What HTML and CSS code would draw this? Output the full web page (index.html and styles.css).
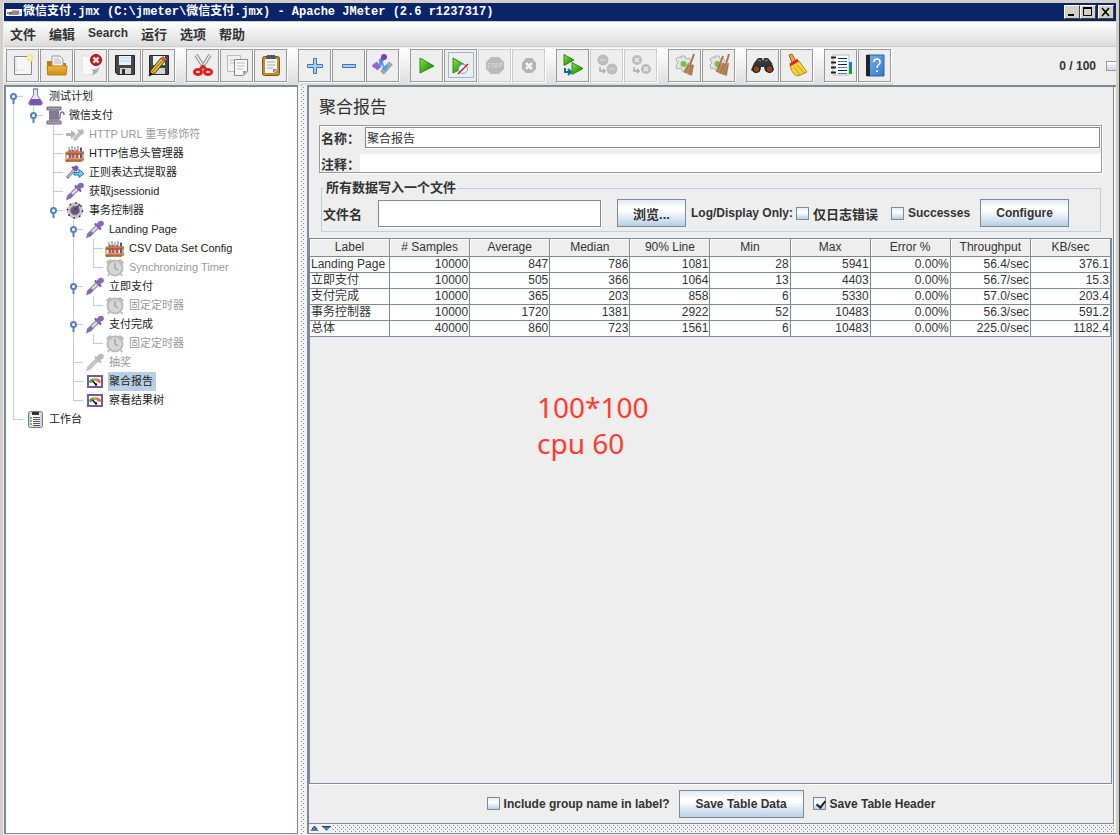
FILE: index.html
```html
<!DOCTYPE html>
<html lang="zh-CN">
<head>
<meta charset="utf-8">
<title>微信支付.jmx - Apache JMeter</title>
<link rel="stylesheet" href="styles.css">
</head>
<body>
<svg class="defs" aria-hidden="true">
  <defs>
    <linearGradient id="gGreen" x1="0" y1="0" x2="1" y2="1"><stop offset="0" stop-color="#8fe05a"/><stop offset=".5" stop-color="#3fb418"/><stop offset="1" stop-color="#1c5c10"/></linearGradient>
    <linearGradient id="gFolder" x1="0" y1="0" x2="0" y2="1"><stop offset="0" stop-color="#f2b93c"/><stop offset="1" stop-color="#cf8a14"/></linearGradient>
    <linearGradient id="gBook" x1="0" y1="0" x2="1" y2="1"><stop offset="0" stop-color="#7db4ec"/><stop offset="1" stop-color="#2f78cc"/></linearGradient>
    <symbol id="dropper" viewBox="0 0 20 19"><path d="M3.500 15.500L13 6" stroke="#77728a" stroke-width="4.500"/><path d="M4 15L13 6" stroke="#dcd8e6" stroke-width="2.500"/><path d="M1 18.500l1-4 4-3.500 2.500 2.500L4 17z" fill="#8866b8"/><path d="M10 3.500l6 6" stroke="#6a4a9e" stroke-width="2"/><path d="M12 7l4-4" stroke="#8866b8" stroke-width="5"/><circle cx="16" cy="3.500" r="2.800" fill="#8866b8"/></symbol>
    <symbol id="dropperOff" viewBox="0 0 20 19"><path d="M3.500 15.500L13 6" stroke="#c4c4c4" stroke-width="4"/><path d="M1 18.500l1-4 4-3.500 2.500 2.500L4 17z" fill="#c4c4c4"/><path d="M10 3.500l6 6" stroke="#b0b0b0" stroke-width="2"/><path d="M12 7l4-4" stroke="#bababa" stroke-width="5"/><circle cx="16" cy="3.500" r="2.800" fill="#bababa"/></symbol>
    <symbol id="rack" viewBox="0 0 20 19"><path d="M4 3v11M7 2v12M10 3v11M13 2v12M16 3v11" stroke="#b9b6cc" stroke-width="2"/><path d="M4 6h2v8H4z" fill="#7060b8"/><path d="M7 6h2v8H7zM11 6h2v8h-2z" fill="#d04a68"/><path d="M15 4h2v10h-2z" fill="#3a50d8"/><path d="M3 8.500h16M1 10l2-2M2 15.500h17M1 17.500l3-2" stroke="#d07c34" stroke-width="2.500"/><path d="M1 10h17M1 17h16" stroke="#a35c22" stroke-width="1.500"/><path d="M1 9v8M18 8v7" stroke="#b86c2c"/></symbol>
    <symbol id="clock" viewBox="0 0 20 19"><path d="M1 4l4-3 3 2-5 4zM19 4l-4-3-3 2 5 4z" fill="#bbb"/><circle cx="10" cy="10" r="7.500" fill="#d6d6d6" stroke="#bcbcbc" stroke-width="2"/><path d="M4 16l-1 2M16 16l1 2" stroke="#bbb" stroke-width="2"/><path d="M10 5v5l3 2" fill="none" stroke="#a4a4a4" stroke-width="1.500"/></symbol>
    <symbol id="gauge" viewBox="0 0 20 19"><rect x="3" y="4" width="14" height="11" fill="#fff" stroke="#7658a8" stroke-width="2"/><path d="M4 10.500a5 4 0 0 1 4-4l1 2.500-3 2z" fill="#37b04a"/><path d="M7.500 6.500a6 4 0 0 1 5 0l-1 2.500H9z" fill="#e8a030"/><path d="M12 6.500a5 4 0 0 1 4 4l-2 .500-3-2z" fill="#f06a50"/><path d="M11 12.500L7.500 9" stroke="#111" stroke-width="1.500"/><circle cx="11" cy="12.500" r="1.200"/></symbol>
    <symbol id="play" viewBox="0 0 24 24"><path d="M5 5v15l14-7z" fill="url(#gGreen)" stroke="#2c8a18"/></symbol>
    <symbol id="twoplay" viewBox="0 0 24 24"><path d="M3 1.500v11l10-5.500z" fill="url(#gGreen)" stroke="#2c8a18"/><path d="M11 9.500v12l11-6z" fill="url(#gGreen)" stroke="#2c8a18"/><path d="M4 15v4h5M7 16l3 3-3 3" fill="none" stroke="#156c86" stroke-width="2"/></symbol>
    <symbol id="gear" viewBox="0 0 24 24"><path d="M8 3h4l1 3 3-1 2 3-2 2 1 4-3 1-2 3H9l-1-3-4 1-1-4 2-2-2-4 3-2 2 1z" fill="#e4e4e4" stroke="#b0b0b0"/><circle cx="10.500" cy="11" r="3" fill="#7ac142"/></symbol>
    <symbol id="handle" viewBox="0 0 7 11"><path d="M3.500 5v6" stroke="#5580bd" stroke-width="2"/><circle cx="3.500" cy="3.500" r="2.500" fill="#fff" stroke="#5580bd" stroke-width="2"/></symbol>
  </defs>
</svg>
<div class="window">
  <header class="titlebar">
    <svg class="appicon" viewBox="0 0 16 7"><path fill="#fff" d="M0 0h16v7H0z"/><path d="M1 4h3l2-1h7M3 5h10" stroke="#222" fill="none"/><path d="M6 2h7" stroke="#e05050"/><path d="M10 4h5" stroke="#8878c0"/></svg>
    <h1 class="caption">微信支付.jmx (C:\jmeter\微信支付.jmx) - Apache JMeter (2.6 r1237317)</h1>
    <div class="winbuttons">
      <button class="winbtn" aria-label="Minimize"><svg viewBox="0 0 12 10"><path d="M2 8h6" stroke="#000" stroke-width="2"/></svg></button>
      <button class="winbtn" aria-label="Maximize"><svg viewBox="0 0 12 10"><path d="M1.500 1.500h8v7h-8z" fill="none" stroke="#000"/><path d="M1 1h9" stroke="#000" stroke-width="2"/></svg></button>
      <button class="winbtn closebtn" aria-label="Close"><svg viewBox="0 0 12 10"><path d="M2 1l7 8M9 1L2 9" stroke="#000" stroke-width="1.600"/></svg></button>
    </div>
  </header>
  <nav class="menubar">
    <button>文件</button><button>编辑</button><button class="latin">Search</button><button>运行</button><button>选项</button><button>帮助</button>
  </nav>
  <div class="toolrow">
    <div class="toolbar">
      <div class="group">
        <button class="tool" aria-label="New"><svg viewBox="0 0 24 24"><path d="M3.500 3.500h17v18h-17z" fill="#f6f6f6" stroke="#888"/><path d="M5 17h9M5 5v14" stroke="#ddd"/><circle cx="19" cy="5" r="2.500" fill="#fffbd0" stroke="#f4e68a" stroke-width="2"/></svg></button>
        <button class="tool" aria-label="Open"><svg viewBox="0 0 24 24"><path d="M2 8h5l2 2h12v12H2z" fill="#b87a18"/><path d="M7 3h8l3 3v9H7z" fill="#f4f4f4" stroke="#999"/><path d="M9 6h5M9 8h7M9 10h7" stroke="#bbb"/><path d="M2 13h20l-1 9H3z" fill="url(#gFolder)" stroke="#c08018"/></svg></button>
        <button class="tool" aria-label="Close"><svg viewBox="0 0 24 24"><path d="M3 3h17v13l-6 6H3z" fill="#f8f8f8" stroke="#ddd"/><path d="M12 22c3-1 2-4 1-6 3 1 6 0 7-2 0 4-3 8-8 8z" fill="#aaa"/><circle cx="17" cy="7" r="5.500" fill="#c8201c" stroke="#931010"/><path d="M14.500 4.500l5 5M19.500 4.500l-5 5" stroke="#fff" stroke-width="2"/></svg></button>
        <button class="tool" aria-label="Save"><svg viewBox="0 0 24 24"><path d="M2.500 2.500h19v19h-17l-2-2z" fill="#44484c" stroke="#25282a"/><path d="M6 3h12v9H6z" fill="#eaf3fb"/><path d="M7 5h10M7 8h10" stroke="#b5d0e8"/><path d="M7 15h11v6H7z" fill="#d4d4d4"/><path d="M9 16h3v5H9z" fill="#333"/></svg></button>
        <button class="tool" aria-label="Save as"><svg viewBox="0 0 24 24"><path d="M2.500 2.500h19v19h-17l-2-2z" fill="#44484c" stroke="#25282a"/><path d="M6 3h12v9H6z" fill="#eaf3fb"/><path d="M7 15h11v6H7z" fill="#d4d4d4"/><path d="M2 23l2-6L14 5l4 3L8 20z" fill="#edbd2e" stroke="#483808"/><path d="M5 19L16 7" stroke="#836414"/><path d="M2 23l1-4 3 2z" fill="#111"/><path d="M14 5l2-2 4 3-2 2z" fill="#d85840"/></svg></button>
      </div>
      <div class="group">
        <button class="tool" aria-label="Cut"><svg viewBox="0 0 24 24"><path d="M5 2l9 14M19 2l-9 14" stroke="#888" stroke-width="3.500"/><path d="M5 2l9 14M19 2l-9 14" stroke="#eee" stroke-width="1.500"/><path d="M9 16l3-3 3 3" fill="none" stroke="#d8221c" stroke-width="2.500"/><ellipse cx="7" cy="19" rx="3.500" ry="2.500" fill="none" stroke="#d8221c" stroke-width="3"/><ellipse cx="17" cy="19" rx="3.500" ry="2.500" fill="none" stroke="#d8221c" stroke-width="3"/></svg></button>
        <button class="tool" aria-label="Copy"><svg viewBox="0 0 24 24"><path d="M2.500 2.500h13v16h-13z" fill="#f2f2f2" stroke="#bbb"/><path d="M9.500 6.500h13v12l-4 4h-9z" fill="#f8f8f8" stroke="#888"/><path d="M5 7h4M5 10h4M12 10h8M12 13h8M12 16h6" stroke="#bbb"/><path d="M18 22v-4h4z" fill="#999"/></svg></button>
        <button class="tool" aria-label="Paste"><svg viewBox="0 0 24 24"><rect x="3.500" y="3.500" width="17" height="19" rx="2" fill="#c28a35" stroke="#805416"/><path d="M6 6h12v11l-3 3H6z" fill="#f5f5f5"/><path d="M8 2h8l1 4H7z" fill="#555a58"/><path d="M8 9h8M8 12h8M8 15h6" stroke="#aaa"/><path d="M14 20v-4h4z" fill="#888"/></svg></button>
      </div>
      <div class="group">
        <button class="tool" aria-label="Expand all"><svg viewBox="0 0 24 24"><path d="M10.500 5.500h3v6h6v3h-6v6h-3v-6h-6v-3h6z" fill="#aed0f0" stroke="#3c74b4"/></svg></button>
        <button class="tool" aria-label="Collapse all"><svg viewBox="0 0 24 24"><path d="M5.500 11.500h13v3h-13z" fill="#aed0f0" stroke="#3c74b4"/></svg></button>
        <button class="tool" aria-label="Toggle"><svg viewBox="0 0 24 24"><path d="M11 20L20 10" stroke="#a5a5a5" stroke-width="5"/><path d="M2 14l5-4M5 16l4-4M9 9l4-5" stroke="#9468d0" stroke-width="4"/><circle cx="13" cy="4" r="3" fill="#7440bc"/><path d="M8 8l4 1 1 4 4-1-2 6-4-2 1-3-4-1z" fill="#38a8f4"/></svg></button>
      </div>
      <div class="group">
        <button class="tool" aria-label="Start"><svg><use href="#play"/></svg></button>
        <button class="tool focused" aria-label="Start no pauses"><svg viewBox="0 0 24 24"><path d="M4 5v15l14-7z" fill="url(#gGreen)" stroke="#2c8a18"/><circle cx="14" cy="16" r="4.500" fill="#eef6fc" stroke="#7aa6cf"/><path d="M9 21l10-10" stroke="#dc1818" stroke-width="1.500"/></svg></button>
        <button class="tool" disabled aria-label="Stop"><svg viewBox="0 0 24 24"><path d="M8 4h8l5 5v7l-5 5H8l-5-5V9z" fill="#bababa"/><path d="M6.500 10.500H5v2h1.500v2H4.500M8 10.500h3M9.500 10.500v4M12 10.500h2v4h-2zM16.500 14.500v-4H19v2h-2.500" fill="none" stroke="#d6d6d6"/></svg></button>
        <button class="tool" disabled aria-label="Shutdown"><svg viewBox="0 0 24 24"><path d="M9 5h6l4 5v6l-4 4H9l-4-4v-6z" fill="#b4b4b4"/><path d="M9 10l6 6M15 10l-6 6" stroke="#f4f4f4" stroke-width="2.500"/></svg></button>
      </div>
      <div class="group">
        <button class="tool" aria-label="Remote start all"><svg><use href="#twoplay"/></svg></button>
        <button class="tool" disabled aria-label="Remote stop all"><svg viewBox="0 0 24 24"><circle cx="8" cy="7" r="5.500" fill="#bdbdbd"/><circle cx="17" cy="16" r="5.500" fill="#bdbdbd"/><path d="M5 7h6M14 16h6" stroke="#d0d0d0" stroke-width="2"/><path d="M5 14v4h5M8 16l2 2-2 2" fill="none" stroke="#aaa" stroke-width="1.500"/></svg></button>
        <button class="tool" disabled aria-label="Remote shutdown all"><svg viewBox="0 0 24 24"><circle cx="8" cy="7" r="5" fill="#bdbdbd"/><circle cx="17" cy="16" r="5" fill="#bdbdbd"/><path d="M6 5l4 4M10 5l-4 4M15 14l4 4M19 14l-4 4" stroke="#eee" stroke-width="1.500"/><path d="M5 14v4h5M8 16l2 2-2 2" fill="none" stroke="#aaa" stroke-width="1.500"/></svg></button>
      </div>
      <div class="group">
        <button class="tool" aria-label="Clear"><svg viewBox="0 0 24 24"><use href="#gear"/><path d="M21 1l-4 11" stroke="#a87850" stroke-width="2"/><path d="M15 10l6 2-2 11-9-4z" fill="#b98d62"/><path d="M16 12l-4 8M18 12l-2 10M20 12l-2 10" stroke="#9a7248"/></svg></button>
        <button class="tool" aria-label="Clear all"><svg viewBox="0 0 24 24"><use href="#gear"/><path d="M16 3l-3 8M22 1l-3 10" stroke="#a87850" stroke-width="2"/><path d="M11 10h11l-2 13-11-4z" fill="#b98d62"/><path d="M13 11l-3 8M16 12l-3 9M18 11l-2 11M21 12l-3 10" stroke="#9a7248"/></svg></button>
      </div>
      <div class="group">
        <button class="tool" aria-label="Search"><svg viewBox="0 0 24 24"><path d="M3 10l4-5h4l1 3 1-3h4l4 5 2 7-4 3-5-2-1-4h-3l-1 4-5 2-4-3z" fill="#34383a"/><circle cx="5.500" cy="16" r="3.500" fill="#88451c" stroke="#181818"/><circle cx="18.500" cy="16" r="3.500" fill="#88451c" stroke="#181818"/><path d="M7 7l3 1M17 7l-3 1" stroke="#858a8c"/></svg></button>
        <button class="tool" aria-label="Search reset"><svg viewBox="0 0 24 24"><path d="M4 2l3-1 4 7-4 2z" fill="#e6a63c" stroke="#9c661c"/><path d="M5 12l9-4 8 11-9 4c-5-1-7-6-8-11z" fill="#f4d13c" stroke="#b48718"/><path d="M5 12l8-5" stroke="#dc2828" stroke-width="3"/><path d="M9 14l6 8M12 12l7 8" stroke="#c29618"/></svg></button>
      </div>
      <div class="group">
        <button class="tool" aria-label="Function helper"><svg viewBox="0 0 24 24"><path d="M4 2h16v20H4z" fill="#fff" stroke="#bbb"/><path d="M20 9h3v6h-3z" fill="#2878dc"/><path d="M20 15h3v6h-3z" fill="#18a038"/><path d="M2 4.500h5M2 9.500h5M2 14.500h5M2 19.500h5" stroke="#222" stroke-width="2"/><path d="M9 5.500h9M9 11.500h9M9 17.500h9" stroke="#222"/><path d="M9 8.500h9M9 14.500h9M9 20.500h9" stroke="#3584e4"/></svg></button>
        <button class="tool" aria-label="Help"><svg viewBox="0 0 24 24"><path d="M4 2h17v21H4z" fill="url(#gBook)" stroke="#31649c"/><path d="M3 2h4v21H3z" fill="#202428"/><path d="M11 9c0-4 6-4 6 0 0 3-3 2.500-3 6M14 17v2" fill="none" stroke="#fff" stroke-width="1.600"/></svg></button>
      </div>
    </div>
    <output class="threads">0 / 100</output>
    <span class="indicator"></span>
  </div>

  <div class="workspace">
    <aside class="treepane">
      <ul class="tree">
        <li><div class="node"><svg class="knob"><use href="#handle"/></svg><svg class="icon" viewBox="0 0 20 19"><path d="M8 2h5M8.500 2v6L4 15c-1 2 0 3 2 3h9c2 0 3-1 2-3l-4.500-7V2z" fill="#e8e4f0" stroke="#85809a"/><path d="M6 12h9l2 4-1 2H5l-1-2z" fill="#7a55b4"/></svg><span>测试计划</span></div>
          <ul>
            <li><div class="node"><svg class="knob"><use href="#handle"/></svg><svg class="icon" viewBox="0 0 20 19"><path d="M2 1h14v3H2zM2 15h14v3H2z" fill="#aaa2b4" stroke="#706878"/><path d="M4 4h10v11H4z" fill="#958ca2"/><path d="M4 6h10M4 8h10M4 10h10M4 12h10" stroke="#716781"/><path d="M14 13c2 0 0-7 3-7 1 0 2 1 2 3" fill="none" stroke="#807890" stroke-width="1.500"/></svg><span>微信支付</span></div>
              <ul>
                <li class="off"><div class="node"><svg class="icon" viewBox="0 0 20 19"><path d="M1 8h5V5l5 4-5 5v-3H1z" fill="#b4b4b4"/><path d="M9 15l9-10" stroke="#c0c0c0" stroke-width="4"/><path d="M13 5l5 4" stroke="#b4b4b4" stroke-width="2"/></svg><span>HTTP URL 重写修饰符</span></div></li>
                <li><div class="node"><svg class="icon"><use href="#rack"/></svg><span>HTTP信息头管理器</span></div></li>
                <li><div class="node"><svg class="icon" viewBox="0 0 20 19"><path d="M2 15l8-9" stroke="#8c86a0" stroke-width="3"/><path d="M3 14l6-7" stroke="#dcd8e6"/><path d="M7 4l5 4" stroke="#6a4a9e" stroke-width="2"/><circle cx="11" cy="5" r="2.500" fill="#7a58ae"/><path d="M9 9.500h5V6.500l5 4-5 4v-2.500H9z" fill="#7cc8f4" stroke="#1878b8"/></svg><span>正则表达式提取器</span></div></li>
                <li><div class="node"><svg class="icon"><use href="#dropper"/></svg><span>获取jsessionid</span></div></li>
                <li><div class="node"><svg class="knob"><use href="#handle"/></svg><svg class="icon" viewBox="0 0 20 19"><circle cx="10" cy="9.500" r="7.500" fill="#cfc8da" stroke="#b4aec4"/><circle cx="10" cy="9.500" r="7.500" fill="none" stroke="#222" stroke-width="1.500" stroke-dasharray="1.500 4.400"/><circle cx="10" cy="9.500" r="4.500" fill="#665878" stroke="#8c80a0"/><path d="M10 9l5-6" stroke="#444" stroke-width="1.500"/></svg><span>事务控制器</span></div>
                  <ul>
                    <li><div class="node"><svg class="knob"><use href="#handle"/></svg><svg class="icon"><use href="#dropper"/></svg><span>Landing Page</span></div>
                      <ul>
                        <li><div class="node"><svg class="icon"><use href="#rack"/></svg><span>CSV Data Set Config</span></div></li>
                        <li class="off"><div class="node"><svg class="icon"><use href="#clock"/></svg><span>Synchronizing Timer</span></div></li>
                      </ul></li>
                    <li><div class="node"><svg class="knob"><use href="#handle"/></svg><svg class="icon"><use href="#dropper"/></svg><span>立即支付</span></div>
                      <ul><li class="off"><div class="node"><svg class="icon"><use href="#clock"/></svg><span>固定定时器</span></div></li></ul></li>
                    <li><div class="node"><svg class="knob"><use href="#handle"/></svg><svg class="icon"><use href="#dropper"/></svg><span>支付完成</span></div>
                      <ul><li class="off"><div class="node"><svg class="icon"><use href="#clock"/></svg><span>固定定时器</span></div></li></ul></li>
                    <li class="off"><div class="node"><svg class="icon"><use href="#dropperOff"/></svg><span>抽奖</span></div></li>
                    <li><div class="node selected"><svg class="icon"><use href="#gauge"/></svg><span>聚合报告</span></div></li>
                    <li><div class="node"><svg class="icon"><use href="#gauge"/></svg><span>察看结果树</span></div></li>
                  </ul></li>
              </ul></li>
          </ul></li>
        <li><div class="node"><svg class="icon" viewBox="0 0 20 19"><rect x="3.500" y="1.500" width="14" height="16" rx="2" fill="#d8d4e0" stroke="#7c7490"/><path d="M6 4h9v12H6z" fill="#f5f5f5"/><path d="M7 2h7v3H7z" fill="#333"/><path d="M8 7.500h7M8 9.500h7M8 11.500h7M8 13.500h7M8 15.500h7" stroke="#555"/><path d="M5 8h2M5 11h2M5 14h2" stroke="#3cb828" stroke-width="1.500"/></svg><span>工作台</span></div></li>
      </ul>
    </aside>
    <div class="vsplit"></div>
    <div class="rightside">
      <main class="report">
        <h2>聚合报告</h2>
        <div class="identity">
          <div class="idrow"><label for="name">名称：</label><input id="name" class="field" type="text" value="聚合报告"></div>
          <div class="idrow comment"><label for="comment">注释：</label><input id="comment" type="text"></div>
        </div>
        <fieldset class="filebox">
          <legend>所有数据写入一个文件</legend>
          <div class="filerow">
            <label for="file">文件名</label>
            <input id="file" class="field filename" type="text">
            <button class="btn browse">浏览...</button>
            <span class="logonly">Log/Display Only:</span>
            <label class="check errors"><input type="checkbox">仅日志错误</label>
            <label class="check"><input type="checkbox">Successes</label>
            <button class="btn configure">Configure</button>
          </div>
        </fieldset>
        <section class="results">
          <table>
            <thead><tr><th>Label</th><th># Samples</th><th>Average</th><th>Median</th><th>90% Line</th><th>Min</th><th>Max</th><th>Error %</th><th>Throughput</th><th>KB/sec</th></tr></thead>
            <tbody>
              <tr><td>Landing Page</td><td>10000</td><td>847</td><td>786</td><td>1081</td><td>28</td><td>5941</td><td>0.00%</td><td>56.4/sec</td><td>376.1</td></tr>
              <tr><td>立即支付</td><td>10000</td><td>505</td><td>366</td><td>1064</td><td>13</td><td>4403</td><td>0.00%</td><td>56.7/sec</td><td>15.3</td></tr>
              <tr><td>支付完成</td><td>10000</td><td>365</td><td>203</td><td>858</td><td>6</td><td>5330</td><td>0.00%</td><td>57.0/sec</td><td>203.4</td></tr>
              <tr><td>事务控制器</td><td>10000</td><td>1720</td><td>1381</td><td>2922</td><td>52</td><td>10483</td><td>0.00%</td><td>56.3/sec</td><td>591.2</td></tr>
              <tr><td>总体</td><td>40000</td><td>860</td><td>723</td><td>1561</td><td>6</td><td>10483</td><td>0.00%</td><td>225.0/sec</td><td>1182.4</td></tr>
            </tbody>
          </table>
          <p class="note">100*100<br>cpu 60</p>
        </section>
        <footer class="savebar">
          <label class="check"><input type="checkbox">Include group name in label?</label>
          <button class="btn savebtn">Save Table Data</button>
          <label class="check"><input type="checkbox" checked>Save Table Header</label>
        </footer>
      </main>
      <div class="hsplit"><svg viewBox="0 0 24 7"><path d="M1 6l4.500-4.500L10 6z" fill="#5078b8"/><path d="M3 4l2.500-3L8 4" fill="none" stroke="#333"/><path d="M13 1.500h9L17.500 6z" fill="#5078b8"/><path d="M13 1.500h9" stroke="#333"/></svg></div>
    </div>
  </div>
</div>
</body>
</html>
```
FILE: styles.css
```css
* { box-sizing: border-box; }
body {
  margin: 0;
  color: #333;
  font: 12px "Liberation Sans", "Noto Sans CJK SC", sans-serif;
}
button, input { font: inherit; color: inherit; margin: 0; }
.defs { position: absolute; width: 0; height: 0; }
.window {
  display: flex;
  flex-direction: column;
  min-height: 100vh;
  padding: 3px 3px 1px 4px;
  background: #eee;
  border-right: 1px solid #404040;
  box-shadow: inset 0 3px #d4d0c8, inset 3px 0 #d4d0c8, inset -3px 0 #d4d0c8;
}

.titlebar {
  display: flex;
  align-items: center;
  height: 18px;
  padding: 0 2px;
  background: #0a246a;
  color: #fff;
}
.appicon { width: 16px; height: 7px; margin-right: 1px; }
.caption {
  flex: 1;
  margin: 0;
  font: bold 12px/20px "Liberation Mono", "Noto Sans CJK SC", monospace;
  white-space: pre;
}
.winbuttons { display: flex; }
.winbtn {
  display: flex;
  align-items: center;
  justify-content: center;
  width: 16px;
  height: 14px;
  padding: 0;
  background: #d4d0c8;
  border: 1px solid;
  border-color: #fff #404040 #404040 #fff;
}
.winbtn svg { width: 12px; height: 10px; }
.closebtn { margin-left: 2px; }

.menubar {
  display: flex;
  align-items: center;
  gap: 13px;
  height: 26px;
  padding: 0 6px 2px;
  background: linear-gradient(#fff, #dcdcdc);
  border-top: 1px solid #d4d0c8;
  border-bottom: 1px solid #ccc;
}
.menubar button {
  padding: 0;
  border: 0;
  background: none;
  font-weight: bold;
  font-size: 13px;
}
.menubar .latin { font-size: 12px; }

.toolrow { display: flex; align-items: center; height: 38px; }
.toolbar {
  display: flex;
  gap: 11px;
  height: 37px;
  padding: 1px 2px;
  background: linear-gradient(#fff, #ddd);
}
.group { display: flex; gap: 1px; }
.tool {
  display: flex;
  align-items: center;
  justify-content: center;
  width: 33px;
  height: 33px;
  padding: 0;
  background: #eee;
  border: 1px solid #999;
  box-shadow: 1px 1px #fff;
}
.tool svg { width: 24px; height: 24px; }
.tool:disabled { border-color: #ccc; }
.focused svg { outline: 1px solid #a3b8cc; }
.threads { margin-left: auto; font-weight: bold; }
.indicator {
  width: 10px;
  height: 10px;
  margin-left: 10px;
  background: linear-gradient(#fff, #c8d8ea);
  border: 1px solid #999;
  border-right: 0;
}

.workspace { display: flex; flex: 1; }
.treepane {
  width: 294px;
  background: #fff;
  border: 2px solid #7a8a99;
  border-right-width: 1px;
  border-bottom-width: 1px;
}
.tree, .tree ul { list-style: none; margin: 0; padding: 0; }
.tree { padding-left: 7px; font-size: 11px; color: #222; }
.tree ul { padding-left: 20px; }
.tree li { position: relative; }
.tree li::before {
  content: "";
  position: absolute;
  left: 0;
  top: 0;
  bottom: 0;
  border-left: 1px solid #b8cfe5;
}
.tree > li:first-child::before { top: 10px; }
.tree li:last-child::before { bottom: auto; height: 10px; }
.node {
  display: flex;
  height: 19px;
  padding-left: 12px;
  line-height: 19px;
  white-space: nowrap;
  background: linear-gradient(#b8cfe5, #b8cfe5) 0 9px / 10px 1px no-repeat;
}
.node .knob { position: absolute; left: -3px; top: 6px; width: 7px; height: 11px; }
.icon { width: 20px; height: 19px; margin-right: 3px; }
.node span { padding: 0 3px 0 1px; }
.off span { color: #999; }
.selected span { background: #b8cfe5; }

.vsplit, .hsplit {
  background-color: #f2f2f2;
  background-image:
    conic-gradient(at 1px 1px, transparent 270deg, #7a8a99 0),
    conic-gradient(at 1px 1px, transparent 270deg, #7a8a99 0);
  background-size: 4px 4px;
  background-position: 0 0, 2px 2px;
}
.vsplit { width: 9px; border: solid #f2f2f2; border-width: 0 2px 0 3px; }
.rightside {
  display: flex;
  flex-direction: column;
  flex: 1;
  min-width: 0;
  border: 2px solid #7a8a99;
  border-right: 0;
  border-bottom-width: 1px;
}
.hsplit { height: 9px; line-height: 0; border: solid #f2f2f2; border-width: 1px 2px 1px 0; }
.hsplit svg { width: 24px; height: 7px; background: #f2f2f2; }
.report {
  display: flex;
  flex-direction: column;
  flex: 1;
  margin-right: 2px;
  border-right: 1px solid #7a8a99;
  border-bottom: 1px solid #7a8a99;
  box-shadow: 1px 1px #fff;
}
.report h2 {
  margin: 9px 10px 5px;
  font-size: 17px;
  line-height: 24px;
  font-weight: normal;
}
.identity {
  margin: 0 11px 0 10px;
  padding: 1px 0 0 1px;
  border: 1px solid #999;
  box-shadow: inset 1px 1px #fff, 1px 1px #fff;
}
.idrow { display: flex; align-items: center; height: 21px; padding-right: 1px; }
.idrow label { width: 44px; font-size: 13px; font-weight: bold; white-space: nowrap; }
.comment { height: 18px; margin-top: 6px; padding: 0; }
.comment label { width: 39px; }
.idrow input { flex: 1; height: 100%; min-width: 0; padding: 0 1px; border: 0; background: #fff; }
.idrow .field, .field { background: #fff; border: 1px solid #7a8a99; }
.field { box-shadow: 1px 1px #fff; }
.filebox {
  min-width: 0;
  margin: 6px 12px 6px;
  padding: 0 0 2px 1px;
  border: 1px solid #b8cfe5;
}
.filebox legend { margin-left: 1px; padding: 0 2px; font-size: 13px; line-height: 18px; font-weight: bold; }
.filerow { display: flex; align-items: center; height: 32px; font-weight: bold; white-space: nowrap; }
.filerow > label:first-child { width: 55px; font-size: 13px; }
.filename { width: 223px; height: 27px; margin-right: 16px; }
.btn {
  height: 28px;
  padding: 0;
  border: 1px solid #7a8a99;
  background: linear-gradient(#dfe9f5, #fff 30%, #fff 40%, #b8cfe5);
  font-weight: bold;
}
.browse { width: 69px; margin-right: 5px; font-size: 13px; }
.logonly { width: 105px; }
.check { display: flex; align-items: center; gap: 4px; font-weight: bold; }
.errors { width: 95px; font-size: 13px; }
.check input {
  appearance: none;
  width: 13px;
  height: 13px;
  border: 1px solid #7a8a99;
  background: linear-gradient(#e4edf7, #fff 40%, #b8cfe5);
}
.check input:checked::after {
  content: "";
  display: block;
  width: 4px;
  height: 7px;
  margin: 1px 0 0 4px;
  border: solid #222;
  border-width: 0 2px 2px 0;
  transform: rotate(38deg);
}
.configure { width: 89px; margin-left: 10px; }

.results { flex: 1; border: 1px solid #7a8a99; margin-right: 1px; box-shadow: 0 1px #fff; }
table { width: 100%; border-collapse: separate; border-spacing: 0; table-layout: fixed; }
th, td {
  height: 16px;
  padding: 0 1px;
  border-right: 1px solid #7a8a99;
  border-bottom: 1px solid #7a8a99;
  line-height: 15px;
  white-space: nowrap;
  overflow: hidden;
}
th { height: 18px; font-weight: normal; box-shadow: inset 1px 1px #fff; line-height: 17px; }
td { background: #fff; text-align: right; }
td:first-child { text-align: left; }
.note {
  margin: 52px 0 0 227px;
  color: #ff3b30;
  font: 28px/36px "Noto Sans", sans-serif;
}
.savebar { display: flex; align-items: center; justify-content: center; gap: 9px; height: 39px; }
.savebtn { width: 125px; }
```
